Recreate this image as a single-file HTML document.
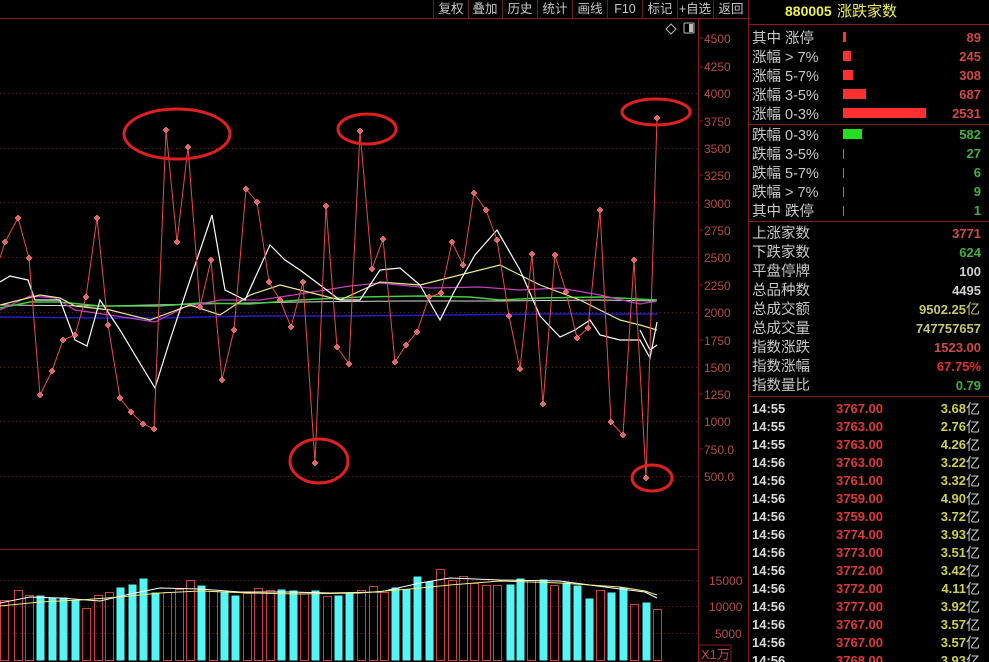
<!DOCTYPE html>
<html><head><meta charset="utf-8"><style>
html,body{margin:0;padding:0;background:#000;width:989px;height:662px;overflow:hidden}
body{position:relative;font-family:"Liberation Sans","Noto Sans CJK SC",sans-serif}
svg{position:absolute;left:0;top:0}
.t{font-family:"Liberation Sans","Noto Sans CJK SC",sans-serif}
</style></head><body>
<svg width="989" height="662" viewBox="0 0 989 662">
<!-- toolbar -->
<line x1="0" y1="18.5" x2="748" y2="18.5" stroke="#8a1a1a"/>
<g stroke="#6a1a1a">
<line x1="433.5" y1="0" x2="433.5" y2="18"/><line x1="468.5" y1="0" x2="468.5" y2="18"/><line x1="502.5" y1="0" x2="502.5" y2="18"/><line x1="537.5" y1="0" x2="537.5" y2="18"/><line x1="572.5" y1="0" x2="572.5" y2="18"/><line x1="607.5" y1="0" x2="607.5" y2="18"/><line x1="642.5" y1="0" x2="642.5" y2="18"/><line x1="677.5" y1="0" x2="677.5" y2="18"/><line x1="713.5" y1="0" x2="713.5" y2="18"/>
</g>
<g class="t" fill="#c8c8c8" font-size="12.5" text-anchor="middle">
<text x="451" y="13">复权</text><text x="485" y="13">叠加</text><text x="520" y="13">历史</text><text x="555" y="13">统计</text><text x="590" y="13">画线</text><text x="625" y="13">F10</text><text x="660" y="13">标记</text><text x="695" y="13">+自选</text><text x="731" y="13">返回</text>
</g>
<!-- icons -->
<path d="M671 24 L676 29 L671 34 L666 29 Z" fill="none" stroke="#bbb"/>
<rect x="684" y="23" width="10" height="10" fill="none" stroke="#bbb" rx="1"/><rect x="689" y="24" width="4" height="8" fill="#bbb"/>
<!-- axis lines -->
<line x1="698.5" y1="18" x2="698.5" y2="662" stroke="#8a1a1a"/>
<line x1="748.5" y1="0" x2="748.5" y2="662" stroke="#8a1a1a"/>
<line x1="0" y1="549.5" x2="698" y2="549.5" stroke="#8a1a1a"/>
<!-- grid -->
<g stroke="#5a2020" stroke-dasharray="1 3">
<line x1="0" y1="93.5" x2="698" y2="93.5"/><line x1="0" y1="148.5" x2="698" y2="148.5"/><line x1="0" y1="202.5" x2="698" y2="202.5"/><line x1="0" y1="257.5" x2="698" y2="257.5"/><line x1="0" y1="312.5" x2="698" y2="312.5"/><line x1="0" y1="367.5" x2="698" y2="367.5"/><line x1="0" y1="421.5" x2="698" y2="421.5"/><line x1="0" y1="476.5" x2="698" y2="476.5"/>
<line x1="0" y1="580.5" x2="698" y2="580.5"/><line x1="0" y1="606.5" x2="698" y2="606.5"/><line x1="0" y1="633.5" x2="698" y2="633.5"/>
</g>
<g class="t" fill="#b84a4a" font-size="12">
<text x="704" y="43">4500</text><text x="704" y="71">4250</text><text x="704" y="98">4000</text><text x="704" y="126">3750</text><text x="704" y="153">3500</text><text x="704" y="180">3250</text><text x="704" y="208">3000</text><text x="704" y="235">2750</text><text x="704" y="262">2500</text><text x="704" y="290">2250</text><text x="704" y="317">2000</text><text x="704" y="345">1750</text><text x="704" y="372">1500</text><text x="704" y="399">1250</text><text x="704" y="426">1000</text><text x="704" y="454">750.0</text><text x="704" y="481">500.0</text>
<text x="709" y="585">15000</text><text x="709" y="611">10000</text><text x="715" y="638">5000</text>
</g>
<g stroke="#8a1a1a"><line x1="698" y1="38" x2="703" y2="38"/><line x1="698" y1="67" x2="703" y2="67"/><line x1="698" y1="121" x2="703" y2="121"/><line x1="698" y1="175" x2="703" y2="175"/><line x1="698" y1="230" x2="703" y2="230"/><line x1="698" y1="285" x2="703" y2="285"/><line x1="698" y1="340" x2="703" y2="340"/><line x1="698" y1="394" x2="703" y2="394"/><line x1="698" y1="449" x2="703" y2="449"/></g>
<rect x="699" y="645" width="32" height="17" fill="none" stroke="#8a1a1a"/>
<text class="t" x="701" y="659" fill="#b84a4a" font-size="13">X1万</text>
<!-- MA lines -->
<polyline fill="none" stroke="#1e1ec8" stroke-width="1.5" points="0,317 100,318 160,318 250,316 350,316 450,315 550,314 657,314"/>
<polyline fill="none" stroke="#dcdcdc" stroke-width="1" points="0,305 100,306 200,304 300,302 400,301 500,301 600,300 657,301"/>
<polyline fill="none" stroke="#40d040" stroke-width="1.5" points="0,308 30,302 60,302 100,306 160,306 200,303 250,304 300,300 360,297 420,296 470,297 500,300 540,298 600,297 657,300"/>
<polyline fill="none" stroke="#c040c0" stroke-width="1.2" points="0,310 30,296 55,298 75,310 110,315 155,322 185,307 220,300 260,300 300,294 350,286 380,283 430,288 480,287 520,290 560,288 600,295 640,304 657,301"/>
<polyline fill="none" stroke="#e8e890" stroke-width="1.2" points="0,305 20,300 40,295 60,298 75,306 110,310 150,320 190,305 220,315 250,295 280,285 300,290 340,300 380,282 420,285 460,275 500,265 540,285 580,300 620,320 640,325 657,330"/>
<polyline fill="none" stroke="#ffffff" stroke-width="1.2" points="0,282 10,276 28,280 35,300 60,300 75,340 87,346 100,300 120,330 135,355 155,388 170,340 190,280 212,215 225,290 245,300 270,245 285,260 300,270 320,285 340,300 360,300 380,270 400,268 420,285 440,320 455,290 475,255 497,230 520,270 540,316 560,337 575,330 590,320 600,335 620,340 640,340 650,358 657,322"/>
<polyline fill="none" stroke="#ffffff" stroke-width="1.2" points="640,330 650,350 657,345"/>
<!-- red line with markers -->
<polyline id="r" fill="none" stroke="#e84a4a" stroke-width="1" points="0,258 5,242 18,218 29,258 40,395 52,371 63,340 75,335 86,297 97,218 108,325 120,398 131,412 143,424 154,429 166,130 177,242 188,147 200,307 211,260 222,380 234,330 246,189 257,202 269,282 280,300 291,327 303,282 315,463 326,206 337,347 349,364 360,131 372,269 383,239 395,362 406,345 417,332 429,297 441,293 452,242 463,265 474,193 486,210 497,240 509,316 520,369 532,254 543,404 555,255 566,292 577,338 588,328 600,210 611,422 623,435 634,260 646,478 657,118"/>
<g fill="#e85050">
<script></script>
</g>
<g fill="#f06060" stroke="#ffb0b0" stroke-width="0.5" id="mk"></g>
<!-- ellipses -->
<g fill="none" stroke="#e02020" stroke-width="3">
<ellipse cx="177" cy="134" rx="53" ry="25"/>
<ellipse cx="367" cy="129" rx="29" ry="15"/>
<ellipse cx="656" cy="112" rx="34" ry="13"/>
<ellipse cx="319" cy="461" rx="29" ry="22"/>
<ellipse cx="652" cy="478" rx="20" ry="13"/>
</g>
<!-- volume bars -->
<g id="vb"></g>
<polyline fill="none" stroke="#ffffff" stroke-width="1" points="0,603 30,597 60,598 100,601 130,594 160,588 200,589 240,592 290,592 330,593 380,592 420,583 450,578 500,580 560,581 620,589 645,592 657,598"/>
<polyline fill="none" stroke="#f0f080" stroke-width="1" points="0,606 40,602 80,600 120,597 160,593 200,591 250,593 300,594 360,593 410,589 450,585 500,581 560,583 620,587 645,591 657,595"/>
<!-- right panel -->
<line x1="748" y1="24.5" x2="989" y2="24.5" stroke="#8a1a1a"/>
<line x1="748" y1="124.5" x2="989" y2="124.5" stroke="#8a1a1a"/>
<line x1="748" y1="221.5" x2="989" y2="221.5" stroke="#8a1a1a"/>
<line x1="748" y1="396.5" x2="989" y2="396.5" stroke="#8a1a1a"/>
<text class="t" x="785" y="16" fill="#f0f050" font-size="14" font-weight="bold">880005</text>
<text class="t" x="837" y="16" fill="#f0f050" font-size="15">涨跌家数</text>
<g class="t" fill="#c8c8c8" font-size="14.5">
<text x="752" y="43">其中 涨停</text><text x="752" y="62">涨幅 &gt; 7%</text><text x="752" y="81">涨幅 5-7%</text><text x="752" y="100">涨幅 3-5%</text><text x="752" y="119">涨幅 0-3%</text>
<text x="752" y="140">跌幅 0-3%</text><text x="752" y="159">跌幅 3-5%</text><text x="752" y="178">跌幅 5-7%</text><text x="752" y="197">跌幅 &gt; 7%</text><text x="752" y="216">其中 跌停</text>
<text x="752" y="238">上涨家数</text><text x="752" y="257">下跌家数</text><text x="752" y="276">平盘停牌</text><text x="752" y="295">总品种数</text><text x="752" y="314">总成交额</text><text x="752" y="333">总成交量</text><text x="752" y="352">指数涨跌</text><text x="752" y="371">指数涨幅</text><text x="752" y="390">指数量比</text>
</g>
<g fill="#ff3030">
<rect x="843" y="32" width="3" height="10"/><rect x="843" y="51" width="8" height="10"/><rect x="843" y="70" width="10" height="10"/><rect x="843" y="89" width="23" height="10"/><rect x="843" y="108" width="83" height="10"/>
</g>
<rect x="843" y="129" width="19" height="10" fill="#20e020"/>
<g fill="#20c020"><rect x="843" y="149" width="1" height="10"/><rect x="843" y="168" width="1" height="10"/><rect x="843" y="187" width="1" height="10"/><rect x="843" y="206" width="1" height="10"/></g>
<g class="t" font-size="13" font-weight="bold" text-anchor="end">
<g fill="#d04848"><text x="981" y="42">89</text><text x="981" y="61">245</text><text x="981" y="80">308</text><text x="981" y="99">687</text><text x="981" y="118">2531</text><text x="981" y="238">3771</text><text x="981" y="352">1523.00</text></g>
<text x="981" y="371" fill="#e03030">67.75%</text>
<g fill="#40b040"><text x="981" y="139">582</text><text x="981" y="158">27</text><text x="981" y="177">6</text><text x="981" y="196">9</text><text x="981" y="215">1</text><text x="981" y="257">624</text><text x="981" y="390">0.79</text></g>
<g fill="#d0d0d0"><text x="981" y="276">100</text><text x="981" y="295">4495</text></g>
<g fill="#c8c870"><text x="966" y="314">9502.25</text><text x="981" y="333">747757657</text></g>
</g>
<text class="t" x="966" y="314" fill="#c8c870" font-size="14">亿</text>
<g id="ticks"></g>
</svg>
<script>
(function(){
var ns="http://www.w3.org/2000/svg";
var pts=document.getElementById('r').getAttribute('points').trim().split(/\s+/).slice(1);
var mk=document.getElementById('mk');
pts.forEach(function(p){var a=p.split(',');var x=+a[0],y=+a[1];var r=document.createElementNS(ns,'path');r.setAttribute('d','M'+x+' '+(y-3)+'L'+(x+3)+' '+y+'L'+x+' '+(y+3)+'L'+(x-3)+' '+y+'Z');mk.appendChild(r);});
var bars=[[0,600,0],[14,590,0],[25,595,0],[36,595,1],[48,597,1],[59,597,1],[71,600,1],[82,608,0],[94,595,0],[105,592,0],[116,587,1],[128,584,1],[139,578,1],[151,592,1],[163,592,0],[175,589,0],[186,580,0],[197,585,1],[209,591,0],[220,591,1],[231,595,1],[243,593,0],[254,588,0],[266,590,0],[277,589,1],[289,590,1],[300,592,0],[311,590,1],[323,596,0],[334,595,1],[345,593,1],[357,590,0],[369,586,0],[380,592,0],[391,587,1],[402,589,1],[413,576,1],[425,581,1],[436,569,0],[448,580,0],[459,576,0],[470,583,0],[482,585,0],[493,585,0],[506,584,1],[516,578,1],[527,580,0],[539,579,1],[550,585,0],[562,582,1],[573,585,1],[585,598,1],[596,590,0],[607,592,1],[619,587,1],[630,604,0],[642,602,1],[653,609,0]];
var vb=document.getElementById('vb');
bars.forEach(function(b){var r=document.createElementNS(ns,'rect');r.setAttribute('x',b[0]+0.5);r.setAttribute('y',b[1]+0.5);r.setAttribute('width',8);r.setAttribute('height',660-b[1]);if(b[2]){r.setAttribute('fill','#55f5f5');}else{r.setAttribute('fill','none');r.setAttribute('stroke','#c84040');}vb.appendChild(r);});
var tk=[["14:55","3767.00","3.68"],["14:55","3763.00","2.76"],["14:55","3763.00","4.26"],["14:56","3763.00","3.22"],["14:56","3761.00","3.32"],["14:56","3759.00","4.90"],["14:56","3759.00","3.72"],["14:56","3774.00","3.93"],["14:56","3773.00","3.51"],["14:56","3772.00","3.42"],["14:56","3772.00","4.11"],["14:56","3777.00","3.92"],["14:56","3767.00","3.57"],["14:56","3767.00","3.57"],["14:56","3768.00","3.93"]];
var g=document.getElementById('ticks');
function t(x,y,s,f,a,fs,w){var e=document.createElementNS(ns,'text');e.setAttribute('x',x);e.setAttribute('y',y);e.setAttribute('fill',f);e.setAttribute('font-size',fs);e.setAttribute('class','t');if(a)e.setAttribute('text-anchor',a);if(w)e.setAttribute('font-weight','bold');e.textContent=s;g.appendChild(e);}
tk.forEach(function(r,i){var y=413+i*18;t(752,y,r[0],'#d8d8d8',null,13,1);t(883,y,r[1],'#e03838','end',13,1);t(966,y,r[2],'#d0d050','end',13,1);t(966,y+1,'亿','#d0d0d0',null,14,0);});
})();
</script>
</body></html>
